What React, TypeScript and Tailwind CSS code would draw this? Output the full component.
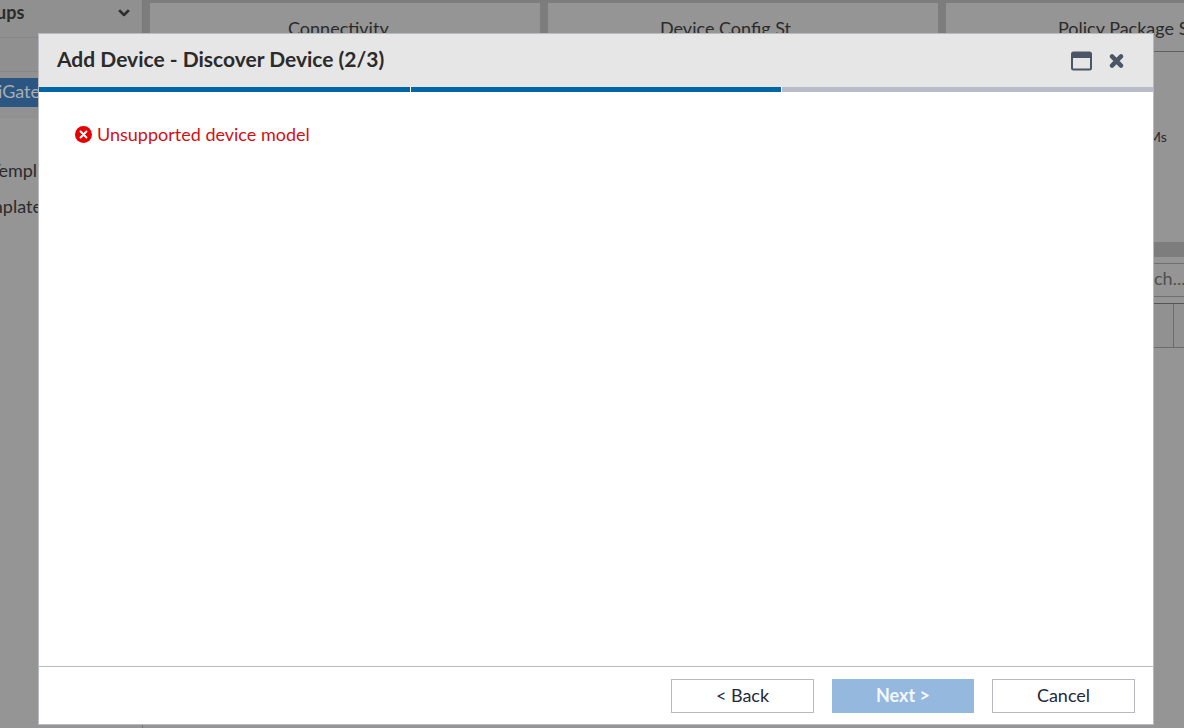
import { useState } from 'react';
import { FaChevronDown } from 'react-icons/fa';

const charts = [
  { title: 'Connectivity', className: 'pl-[138px]' },
  { title: 'Device Config St', className: 'pl-[112px]' },
  { title: 'Policy Package S', className: 'pl-[112px]', legend: 'Ms' },
];

function Sidebar() {
  return (
    <aside className="flex w-[143px] shrink-0 flex-col overflow-hidden border-r border-[#777777] bg-[#959595] text-lg leading-6 whitespace-nowrap">
      <div className="flex h-[38px] shrink-0 items-start justify-between border-b border-[#868686] bg-[#909090] pr-3">
        <span className="-ml-1 font-bold">ups</span>
        <FaChevronDown className="mt-[7px] h-3 w-3" stroke="currentColor" strokeWidth="40" />
      </div>
      <div className="h-[34px] shrink-0 border-b border-[#868686] bg-[#909090]" />
      <div className="shrink-0 border-b border-[#909090] bg-[#919191] pt-1.5 pb-2.5">
        <a href="#managed" className="block h-[29px] bg-[#2c5682] -indent-0.5 leading-[26px] text-[#a9adb2]">
          iGate
        </a>
      </div>
      <nav className="mt-[34px] flex flex-col">
        <a href="#templates" className="-ml-2.5 block h-9 leading-9">
          Templ
        </a>
        <a href="#template-groups" className="-ml-3 block h-9 leading-9">
          mplate
        </a>
      </nav>
    </aside>
  );
}

function Dashboard() {
  return (
    <main className="flex min-w-0 flex-1 flex-col overflow-hidden bg-[#959595]">
      <div className="flex h-[257px] shrink-0 gap-2 bg-[#7d7d7d] pt-[3px] pb-[15px] pl-[7px]">
        {charts.map((chart) => (
          <section key={chart.title} className="w-[390px] shrink-0 bg-[#959595]">
            <h2
              className={`h-[49px] border-b border-[#606060] text-lg leading-[51px] whitespace-nowrap ${chart.className}`}
            >
              {chart.title}
            </h2>
            {chart.legend && <p className="pt-[75px] pl-[202px] text-sm leading-5">{chart.legend}</p>}
          </section>
        ))}
      </div>
      <div className="flex shrink-0 justify-end py-1.5">
        <input
          type="text"
          aria-label="Search"
          placeholder="ch..."
          className="h-[34px] w-[33px] border-y border-[#6f6f6f] pb-1 pl-[3px] text-lg placeholder:text-[#4f4f4f]"
        />
      </div>
      <div className="flex h-[45px] shrink-0 justify-end border-t border-b border-t-[#555555] border-b-[#6c6c6c] bg-[#919191]">
        <div className="w-[11px] border-l border-[#6c6c6c]" />
      </div>
    </main>
  );
}

function WindowIcon() {
  return (
    <svg viewBox="0 0 22 20" className="h-5 w-[22px]" fill="none" aria-hidden="true">
      <rect x="1" y="1.5" width="19" height="17" rx="1.5" stroke="currentColor" strokeWidth="2" />
      <path d="M1 2h19v5H1z" fill="currentColor" />
    </svg>
  );
}

function CloseIcon() {
  return (
    <svg viewBox="0 0 16 16" className="h-4 w-4" fill="none" aria-hidden="true">
      <path d="M3 3.4l9 9.2M12 3.4l-9 9.2" stroke="currentColor" strokeWidth="4.4" strokeLinecap="round" />
    </svg>
  );
}

function ErrorIcon() {
  return (
    <svg viewBox="0 0 17 17" className="h-[17px] w-[17px]" fill="none" aria-hidden="true">
      <circle cx="8.5" cy="8.5" r="8.5" fill="#e60000" />
      <path d="M5.6 5.6l5.8 5.8M11.4 5.6l-5.8 5.8" stroke="#fff" strokeWidth="2.1" strokeLinecap="round" />
    </svg>
  );
}

function App() {
  const [step] = useState(2);

  return (
    <div className="relative flex h-screen overflow-hidden font-['Lato',sans-serif] text-[#2b2b2b]">
      <Sidebar />
      <Dashboard />

      <div className="absolute inset-0 flex pt-[33px] pr-[30px] pb-[3px] pl-[38px]">
        <div
          role="dialog"
          aria-labelledby="dialog-title"
          className="flex flex-1 flex-col border border-[#b7babf] bg-white"
        >
          <header className="flex h-[53px] shrink-0 items-center justify-between bg-[#e6e6e6] pr-7 pl-[18px]">
            <h1 id="dialog-title" className="pb-1 text-[21px] leading-7 font-bold">
              Add Device - Discover Device (2/3)
            </h1>
            <div className="flex items-center gap-4 text-[#4b5565]">
              <button type="button" aria-label="Maximize">
                <WindowIcon />
              </button>
              <button type="button" aria-label="Close">
                <CloseIcon />
              </button>
            </div>
          </header>

          <div className="grid h-[5px] shrink-0 grid-cols-3 gap-px">
            {[1, 2, 3].map((n) => (
              <div key={n} className={n <= step ? 'bg-[#0066a5]' : 'bg-[#b8bcc8]'} />
            ))}
          </div>

          <div className="flex-1 px-9 pt-[30px]">
            <p role="alert" className="flex items-center gap-[5px] text-lg leading-6 text-[#d40f14]">
              <ErrorIcon />
              Unsupported device model
            </p>
          </div>

          <footer className="flex h-[58px] shrink-0 items-center justify-end gap-[18px] border-t border-[#b7babf] px-[18px] text-lg text-[#1f2a3a]">
            <button type="button" className="h-[34px] w-[143px] border border-[#b7babf] pb-0.5">
              &lt; Back
            </button>
            <button
              type="button"
              disabled
              className="h-[34px] w-[142px] bg-[#95b9de] pb-0.5 font-bold text-[#f4f8fc]"
            >
              Next &gt;
            </button>
            <button type="button" className="h-[34px] w-[143px] border border-[#b7babf] pb-0.5">
              Cancel
            </button>
          </footer>
        </div>
      </div>
    </div>
  );
}

export default App;
